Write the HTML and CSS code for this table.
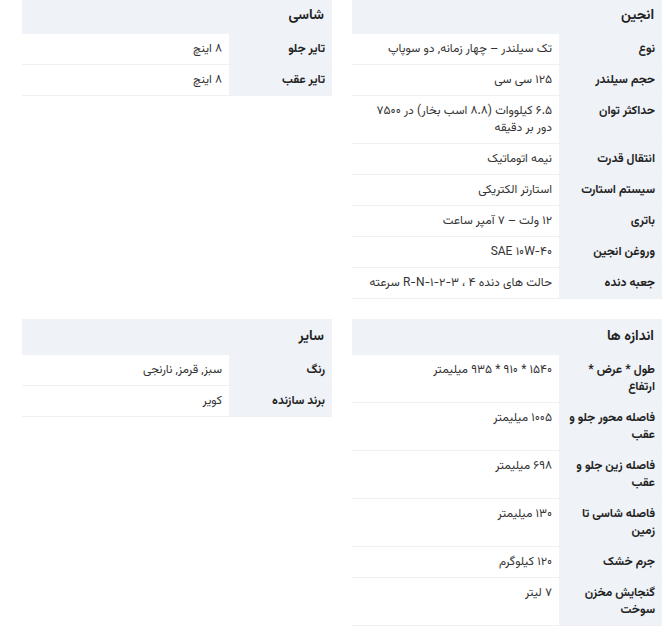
FILE: index.html
```html
<!DOCTYPE html>
<html lang="fa" dir="rtl">
<head>
<meta charset="utf-8">
<title>مشخصات فنی</title>
<link rel="stylesheet" href="styles.css">
</head>
<body>
<div class="specs">
  <section class="group">
    <h3 class="group-title">انجین</h3>
    <table class="spec-table">
      <tr><th>نوع</th><td>تک سیلندر – چهار زمانه, دو سوپاپ</td></tr>
      <tr><th>حجم سیلندر</th><td>۱۲۵ سی سی</td></tr>
      <tr><th>حداکثر توان</th><td>۶.۵ کیلووات (۸.۸ اسب بخار) در ۷۵۰۰ دور بر دقیقه</td></tr>
      <tr><th>انتقال قدرت</th><td>نیمه اتوماتیک</td></tr>
      <tr><th>سیستم استارت</th><td>استارتر الکتریکی</td></tr>
      <tr><th>باتری</th><td>۱۲ ولت – ۷ آمپر ساعت</td></tr>
      <tr><th>وروغن انجین</th><td>SAE ۱۰W-۴۰</td></tr>
      <tr><th>جعبه دنده</th><td>حالت های دنده ۴ ، R-N-۱-۲-۳ سرعته</td></tr>
    </table>
  </section>
  <section class="group">
    <h3 class="group-title">شاسی</h3>
    <table class="spec-table">
      <tr><th>تایر جلو</th><td>۸ اینچ</td></tr>
      <tr><th>تایر عقب</th><td>۸ اینچ</td></tr>
    </table>
  </section>
  <section class="group">
    <h3 class="group-title">اندازه ها</h3>
    <table class="spec-table">
      <tr><th>طول * عرض * ارتفاع</th><td>۱۵۴۰ * ۹۱۰ * ۹۳۵ میلیمتر</td></tr>
      <tr><th>فاصله محور جلو و عقب</th><td>۱۰۰۵ میلیمتر</td></tr>
      <tr><th>فاصله زین جلو و عقب</th><td>۶۹۸ میلیمتر</td></tr>
      <tr><th>فاصله شاسی تا زمین</th><td>۱۳۰ میلیمتر</td></tr>
      <tr><th>جرم خشک</th><td>۱۲۰ کیلوگرم</td></tr>
      <tr><th>گنجایش مخزن سوخت</th><td>۷ لیتر</td></tr>
    </table>
  </section>
  <section class="group">
    <h3 class="group-title">سایر</h3>
    <table class="spec-table">
      <tr><th>رنگ</th><td>سبز, قرمز, نارنجی</td></tr>
      <tr><th>برند سازنده</th><td>کویر</td></tr>
    </table>
  </section>
</div>
</body>
</html>
```
FILE: styles.css
```css
html, body {
  margin: 0;
  padding: 0;
  background: #fff;
}
body {
  font-family: "Vazirmatn", "Vazir", "Noto Sans Arabic", "Noto Naskh Arabic", "Noto Sans", sans-serif;
  color: #333;
  padding: 0 8px 0 22px;
}
.specs {
  margin-top: -2px;
  display: grid;
  grid-template-columns: 310px 310px;
  column-gap: 20px;
  row-gap: 20px;
  align-items: start;
}
.group-title {
  margin: 0;
  height: 36px;
  box-sizing: border-box;
  padding: 8px 8px 0;
  background: #eff2f7;
  font-size: 14px;
  line-height: 20px;
  font-weight: bold;
  color: #222;
}
.spec-table {
  width: 100%;
  border-collapse: collapse;
  font-size: 12px;
  line-height: 17px;
}
.spec-table th,
.spec-table td {
  vertical-align: top;
  text-align: right;
  padding: 7px 7px 6px;
  border-bottom: 1px solid #eef0f4;
}
.spec-table th {
  width: 103px;
  box-sizing: border-box;
  background: #eff2f7;
  font-weight: bold;
  color: #222;
}
.spec-table td {
  color: #333;
}
```
